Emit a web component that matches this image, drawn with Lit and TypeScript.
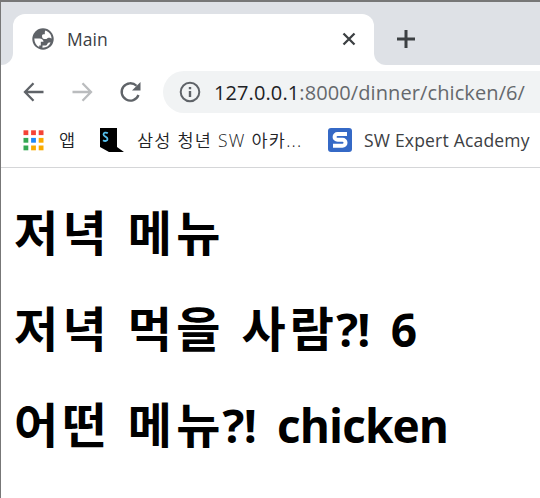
import { LitElement, html, css, svg } from "lit";
import { customElement } from "lit/decorators.js";

const APP_COLORS = ["#f44336", "#f44336", "#f44336", "#34a853", "#1e88f7", "#f9ab00", "#34a853", "#f9ab00", "#f9ab00"];

@customElement("app-root")
export class AppRoot extends LitElement {
  static styles = css`
    :host { display: block; }
    * { box-sizing: border-box; }
    .window { width: 540px; height: 498px; overflow: hidden; background: #fff; border-left: 1px solid #777; border-top: 2px solid #777;
      font-family: "Open Sans", "Noto Sans CJK KR", sans-serif; color: #3c4043; white-space: nowrap; }
    svg { display: block; flex: none; }
    .strip { height: 63px; background: #fff; display: flex; }
    .edge { width: 12px; background: #dee1e6; border-bottom-right-radius: 12px; }
    .tabwrap { width: 361px; background: #dee1e6; }
    .tab { height: 51px; margin-top: 12px; background: #fff; border-radius: 12px 12px 0 0; display: flex; align-items: center; padding: 0 18px 2px 18px; }
    .title { margin-left: 12px; flex: 1; font-size: 17.5px; line-height: 24px; }
    .rest { flex: 1; background: #dee1e6; border-bottom-left-radius: 12px; padding: 27px 0 0 22px; }
    .toolbar { height: 54px; display: flex; align-items: center; padding-left: 22px; }
    .back { margin-right: 26px; }
    .forward { margin-right: 26px; }
    .address { margin-left: 20px; flex: 1; height: 42px; border-radius: 21px 0 0 21px; background: #f1f3f4; display: flex; align-items: center; padding-left: 16px; }
    .url { margin-left: 13px; font-size: 20px; line-height: 26px; color: #65686c; padding-top: 1px; letter-spacing: 0.1px; }
    .host { color: #202124; }
    .bookmarks { height: 49px; border-bottom: 1px solid #d5d6d8; display: flex; align-items: center; padding: 0 0 6px 22px; font-size: 17.5px; line-height: 24px; }
    .label { margin-left: 15px; }
    .light { font-weight: 340; color: #202124; }
    .label.first { width: 18px; margin-right: 23px; }
    .label.second { width: 168px; margin-left: 13px; margin-right: 23px; letter-spacing: 1.25px; }
    .label.third { margin-left: 12px; letter-spacing: 0.2px; }
    .page { padding: 33px 0 0 14px; color: #000; font-size: 48px; font-weight: 700; }
    h1 { margin: 0; height: 96px; line-height: 64px; font-size: inherit; }
    .ko { letter-spacing: 4.3px; margin-left: -1px; }
    .la { font-size: 46px; font-weight: 670; letter-spacing: -0.9px; word-spacing: 10px; margin-left: -2px; }
  `;

  render() {
    return html`<div class="window">
      <div class="strip">
        <div class="edge"></div>
        <div class="tabwrap"><div class="tab">
          <svg width="24" height="24" viewBox="0 0 24 24"><circle cx="12" cy="12" r="10.700" fill="#5f6368"/><path fill="#fff" d="M3.300 11.500h5.200c2.500 0 4 1.300 4 3.300h-2.700v3.600h-1.600v1.700C5.300 18.500 3.300 15.500 3.300 11.500z"/><path fill="#fff" d="M14.300 3.500c3.600 1 6.200 4.300 6.300 8-1.500-1-2-.8-3.200-.8-1 .1-1.500 1.400-2.700 1.400-2.600 0-3.700-1-3.700-3.200 0-1.500 1-1.700 2.800-1.700V5.100z"/><path fill="#fff" d="M11.500 20.800v-2.200h3.400c1.600 0 1.300-3 3.100-3h1.600a8.800 8.800 0 0 1-8.100 5.200z"/></svg>
          <span class="title">Main</span>
          <svg width="14" height="14" viewBox="0 0 14 14"><path d="M1.500 1.500l11 11M12.500 1.500l-11 11" stroke="#3c4043" stroke-width="2.300"/></svg>
        </div></div>
        <div class="rest"><svg width="20" height="20" viewBox="0 0 20 20"><path d="M10 1v18M1 10h18" stroke="#3c4043" stroke-width="3"/></svg></div>
      </div>
      <div class="toolbar">
        <svg class="back" width="22" height="20" viewBox="0 0 22 20"><path d="M20.500 10H3M10.500 1.200L2 10l8.500 8.800" fill="none" stroke="#5f6368" stroke-width="2.300"/></svg>
        <svg class="forward" width="22" height="20" viewBox="0 0 22 20"><path d="M1.500 10H19M11.500 1.200L20 10l-8.500 8.800" fill="none" stroke="#babcbe" stroke-width="2.300"/></svg>
        <svg width="24" height="22" viewBox="0 0 24 22"><path d="M19.500 14A8.700 8.700 0 1 1 17.500 4.800" fill="none" stroke="#5f6368" stroke-width="2.300"/><path d="M21.500 1v8.500H13z" fill="#5f6368"/></svg>
        <div class="address">
          <svg width="22" height="22" viewBox="0 0 22 22"><circle cx="11" cy="11" r="9.300" fill="none" stroke="#5f6368" stroke-width="2"/><path d="M11 10v6M11 6v2.300" stroke="#5f6368" stroke-width="2.400"/></svg>
          <span class="url"><span class="host">127.0.0.1</span>:8000/dinner/chicken/6/</span>
        </div>
      </div>
      <div class="bookmarks">
        <svg width="21" height="21" viewBox="0 0 21 21">${APP_COLORS.map((c, i) => svg`<rect x=${(i % 3) * 7.6 + 0.5} y=${Math.floor(i / 3) * 7.6 + 0.3} width="4.800" height="4.800" fill=${c}/>`)}</svg>
        <span class="label first light">앱</span>
        <svg width="24" height="24" viewBox="0 0 24 24"><path d="M0 0h17v19l7 5H9l-9-5z" fill="#000"/><path d="M7.800 5.300C6 4 3.500 4.700 3.500 6.500c0 2.300 4 2 4 4.500 0 2-2.500 2.600-4.500 1.200" fill="none" stroke="#56c1ef" stroke-width="1.800"/></svg>
        <span class="label second light">삼성 청년 SW 아카...</span>
        <svg width="24" height="24" viewBox="0 0 24 24"><rect width="24" height="24" rx="3" fill="#3569c6"/><path d="M19 6H9.500a2.800 2.800 0 0 0 0 5.800h5a3 3 0 0 1 0 6H5" fill="none" stroke="#fff" stroke-width="4"/></svg>
        <span class="label third">SW Expert Academy</span>
      </div>
      <div class="page">
        <h1><span class="ko">저녁 메뉴</span></h1>
        <h1><span class="ko">저녁 먹을 사람</span><span class="la">?! 6</span></h1>
        <h1><span class="ko">어떤 메뉴</span><span class="la">?! chicken</span></h1>
      </div>
    </div>`;
  }
}
